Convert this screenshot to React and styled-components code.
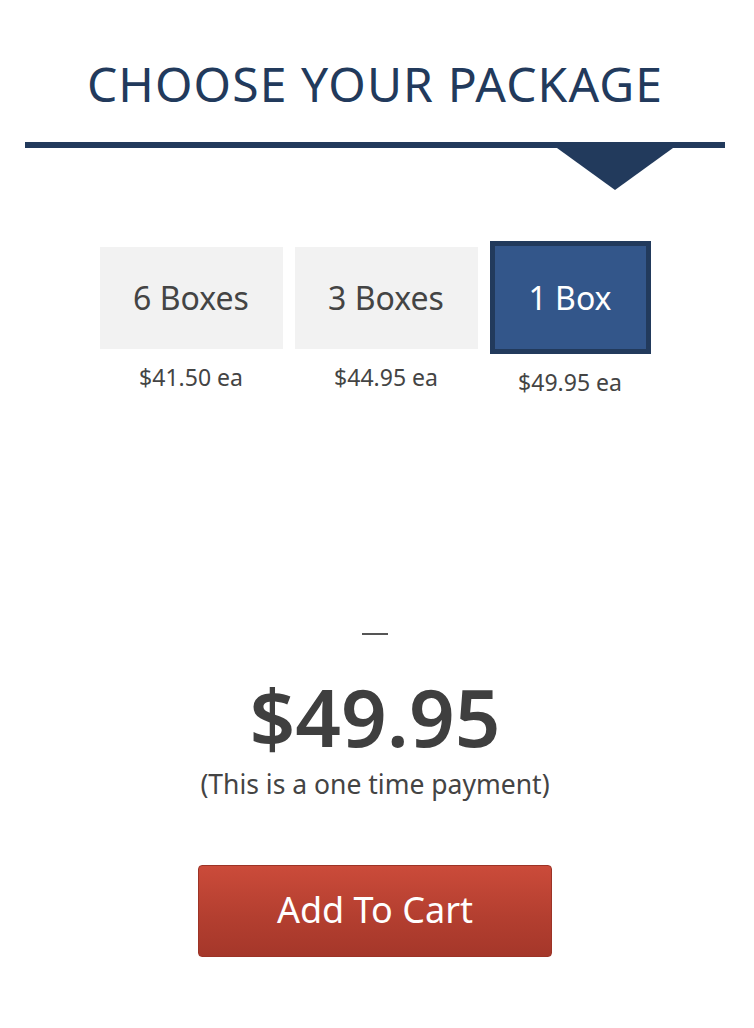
import React, { useState } from "react";
import styled, { createGlobalStyle } from "styled-components";

const Global = createGlobalStyle`
  html, body { margin: 0; padding: 0; background: #ffffff; }
  body { font-family: "Noto Sans", "Open Sans", sans-serif; }
`;

const Page = styled.div`
  width: 754px;
  padding: 0 29px 0 25px;
  box-sizing: border-box;
  display: flex;
  flex-direction: column;
  align-items: center;
`;

const Title = styled.h1`
  margin: 52px 0 0;
  font-size: 48px;
  line-height: 64px;
  font-weight: 400;
  color: #223a5c;
  letter-spacing: 1.1px;
`;

const Divider = styled.div`
  position: relative;
  align-self: stretch;
  height: 6px;
  margin-top: 26px;
  background: #223a5c;
  &::after {
    content: "";
    position: absolute;
    top: 6px;
    left: 532px;
    border-left: 58px solid transparent;
    border-right: 58px solid transparent;
    border-top: 42px solid #223a5c;
  }
`;

const Options = styled.div`
  display: flex;
  align-items: center;
  gap: 12px;
  margin-top: 93px;
`;

const Option = styled.div`
  display: flex;
  flex-direction: column;
  align-items: center;
  cursor: pointer;
`;

const OptionBox = styled.div`
  width: ${(p) => (p.$active ? "151px" : "183px")};
  height: ${(p) => (p.$active ? "103px" : "102px")};
  box-sizing: content-box;
  display: flex;
  align-items: center;
  justify-content: center;
  background: ${(p) => (p.$active ? "#33568a" : "#f2f2f2")};
  border: ${(p) => (p.$active ? "5px solid #223a5c" : "none")};
  color: ${(p) => (p.$active ? "#ffffff" : "#444444")};
  font-size: 32px;
  line-height: 40px;
`;

const OptionPrice = styled.div`
  margin-top: 14px;
  font-size: 23px;
  line-height: 28px;
  color: #444444;
`;

const Dash = styled.div`
  margin-top: 237px;
  width: 26px;
  height: 2px;
  background: #555555;
`;

const BigPrice = styled.div`
  margin-top: 36px;
  font-size: 80px;
  line-height: 90px;
  font-weight: 560;
  color: #3f3f3f;
`;

const Note = styled.div`
  margin-top: 6px;
  font-size: 26.5px;
  line-height: 34px;
  color: #444444;
`;

const CartButton = styled.button`
  margin-top: 64px;
  width: 354px;
  height: 92px;
  border: 1px solid #9c3326;
  border-radius: 4px;
  background: linear-gradient(#cb4b3a, #b43f30 55%, #a5372a);
  color: #ffffff;
  font-family: inherit;
  font-size: 36px;
  cursor: pointer;
  padding-bottom: 4px;
`;

const packages = [
  { label: "6 Boxes", price: "$41.50 ea" },
  { label: "3 Boxes", price: "$44.95 ea" },
  { label: "1 Box", price: "$49.95 ea" },
];

export default function App() {
  const [active, setActive] = useState(2);
  return (
    <Page>
      <Global />
      <Title>CHOOSE YOUR PACKAGE</Title>
      <Divider />
      <Options>
        {packages.map((p, i) => (
          <Option key={p.label} onClick={() => setActive(i)}>
            <OptionBox $active={i === active}>{p.label}</OptionBox>
            <OptionPrice>{p.price}</OptionPrice>
          </Option>
        ))}
      </Options>
      <Dash />
      <BigPrice>$49.95</BigPrice>
      <Note>(This is a one time payment)</Note>
      <CartButton>Add To Cart</CartButton>
    </Page>
  );
}
